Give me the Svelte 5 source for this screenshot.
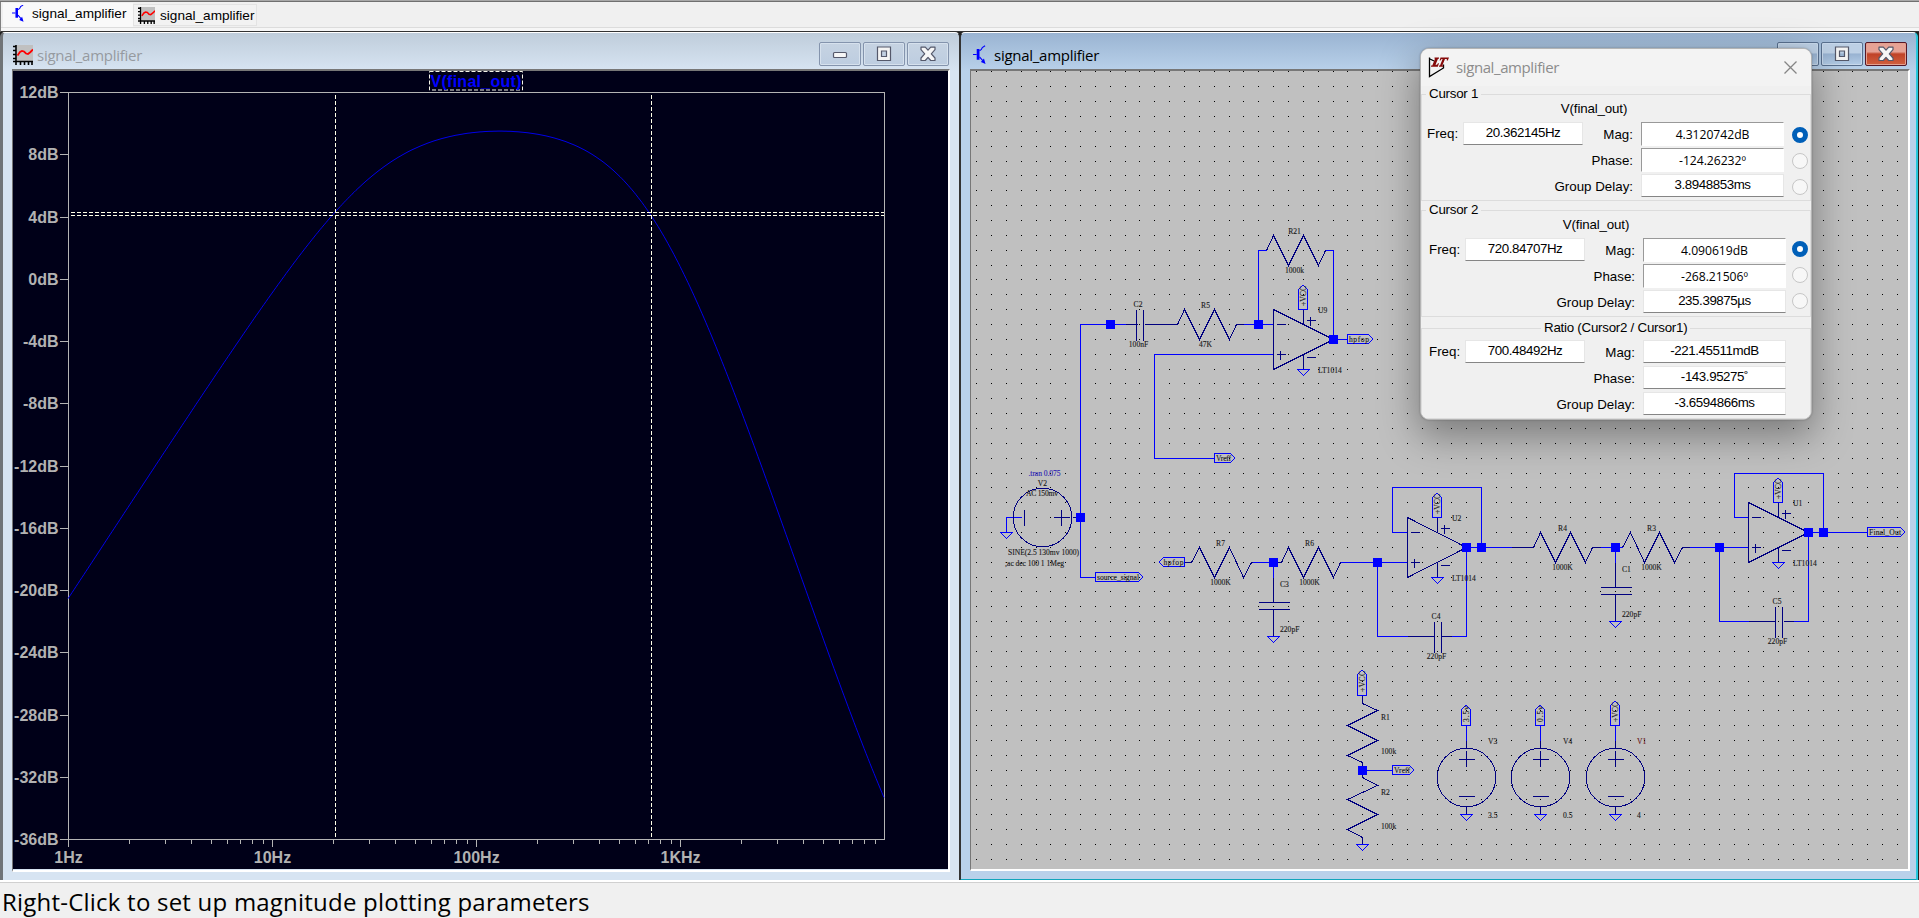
<script>
  // Schematic grid: column k and row n to pixel centres
  const X = (k) => Math.floor(976.6 + 14.852 * k) + 0.5;
  const Y = (n) => Math.floor(71.87 + 14.857 * n) + 0.5;

  let dots = '';
  for (let n = 0; n < 54; n++)
    for (let k = 0; k < 63; k++) dots += `M${X(k) - 0.5} ${Y(n)}h1`;

  const poly = (pts) => 'M' + pts.map(([k, n]) => `${X(k)} ${Y(n)}`).join('L');

  const wires = [
    [[9, 17], [7, 17], [7, 34], [8, 34]],
    [[9, 17], [10, 17]],
    [[18, 17], [20, 17]],
    [[19, 17], [19, 12], [19.5, 12]],
    [[23.5, 12], [24, 12], [24, 18], [25, 18]],
    [[20, 19], [12, 19], [12, 26], [16, 26]],
    [[3, 30], [2, 30], [2, 31]],
    [[18.6, 33], [20, 33]],
    [[20, 33], [20, 34]],
    [[24.5, 33], [29, 33]],
    [[29, 31], [28, 31], [28, 28], [34, 28], [34, 32]],
    [[33, 32], [36, 32]],
    [[27, 33], [27, 38], [29, 38]],
    [[32, 38], [33, 38], [33, 32]],
    [[42, 32], [43.5, 32]],
    [[43, 32], [43, 33]],
    [[48, 32], [52, 32]],
    [[52, 30], [51, 30], [51, 27], [57, 27], [57, 31]],
    [[56, 31], [60, 31]],
    [[50, 32], [50, 37], [52, 37]],
    [[55, 37], [56, 37], [56, 31]],
    [[26, 47], [28, 47]],
    [[33, 44], [33, 45]],
    [[38, 44], [38, 45]],
    [[43, 44], [43, 45]]
  ].map(poly).join('');

  const leads = [
    [[10, 17], [10.8, 17]],
    [[11.3, 17], [13.5, 17]],
    [[17.5, 17], [18, 17]],
    [[2, 30], [2.55, 30]],
    [[6.45, 30], [7, 30]],
    [[14, 33], [14.5, 33]],
    [[18.5, 33], [19, 33]],
    [[20, 33], [20.5, 33]],
    [[24.5, 33], [25, 33]],
    [[36, 32], [37.5, 32]],
    [[41.5, 32], [42, 32]],
    [[47.5, 32], [48, 32]],
    [[29, 38], [30.8, 38]],
    [[31.3, 38], [32.2, 38]],
    [[52, 37], [53.8, 37]],
    [[54.3, 37], [55.2, 37]]
  ].map(poly).join('');

  const squares = [[9, 17], [19, 17], [24, 18], [7, 30], [20, 33], [27, 33], [33, 32], [34, 32], [43, 32], [50, 32], [56, 31], [57, 31], [26, 47]];

  const hres = [
    [13, 17, 'R5', '47K'], [19, 12, 'R21', '1000k'], [14, 33, 'R7', '1000K'],
    [20, 33, 'R6', '1000K'], [37, 32, 'R4', '1000K'], [43, 32, 'R3', '1000K']
  ];
  const zig = (k, n) =>
    poly([[k + 0.5, n], [k + 1, n - 1], [k + 2, n + 1], [k + 3, n - 1], [k + 4, n + 1], [k + 4.5, n]]);
  const vres = [[26, 42, 'R1', '100k'], [26, 47, 'R2', '100k']];
  const vzig = (k, n) =>
    poly([[k, n], [k, n + 0.5], [k + 1, n + 1], [k - 1, n + 2], [k + 1, n + 3], [k - 1, n + 4], [k, n + 4.5], [k, n + 5]]);
  const hcaps = [[11, 17, 'C2', '100nF'], [31, 38, 'C4', '220pF'], [54, 37, 'C5', '220pF']];
  const vcaps = [[20, 36, 'C3', '220pF'], [43, 35, 'C1', '220pF']];
  const amps = [[20, 16, 'U9'], [29, 30, 'U2'], [52, 29, 'U1']];
  const sources = [[33, 'V3', '3.5', 1488], [38, 'V4', '0.5', 1563], [43, 'V1', '4', 1637]];
  const grounds = [[22, 20], [31, 34], [54, 33], [20, 38], [43, 37], [2, 31], [26, 52], [33, 50], [38, 50], [43, 50]];
  const upTags = [[22, 16, '+VCC', 25], [31, 30, '+VCC', 25], [54, 29, '+VCC', 25], [26, 42, '+VCC', 26], [33, 44, '3.5v', 21], [38, 44, '0.5v', 21], [43, 44, '+VCC', 25]];
  const sideTags = [
    [25, 18, 'hpfop', 21, 1], [16, 26, 'Vreff', 16, 1], [8, 34, 'source_signal', 43, 1],
    [14, 33, 'hpfop', 21, -1], [60, 31, 'Final_Out', 33, 1], [28, 47, 'Vreff', 17, 1]
  ];

  // Frequency response of the filter
  const gain = (f) => {
    const hp = f / Math.sqrt(f * f + 33.9 * 33.9);
    const lp = 1 / (1 + (f / 723) ** 2);
    return 20 * Math.log10(3.191 * hp * lp) + 2.3 * (f / 10000) ** 1.7;
  };
  let curve = '';
  for (let x = 68; x <= 884; x += 2) {
    const y = 92.5 + ((12 - gain(10 ** ((x - 68) / 204))) * 62.25) / 4;
    curve += (curve ? 'L' : 'M') + x + ' ' + y.toFixed(1);
  }
  const yTicks = Array.from({ length: 13 }, (_, i) => ({ y: Math.round(92 + i * 62.25) + 0.5, t: 12 - 4 * i + 'dB' }));
  const xTicks = ['1Hz', '10Hz', '100Hz', '1KHz'].map((t, i) => ({ t, x: 68.5 + 204 * i }));
  let minors = '';
  for (let d = 0; d < 4; d++)
    for (let m = 2; m < 10; m++) minors += `M${Math.round(68 + 204 * (d + Math.log10(m))) + 0.5} 840v4`;

  const groups = [
    { cls: 'one', legend: 'Cursor 1', sub: 'V(final_out)', freq: '20.362145Hz', rows: [['Mag:', '4.3120742dB'], ['Phase:', '-124.26232º'], ['Group Delay:', '3.8948853ms']], radios: true },
    { cls: 'two', legend: 'Cursor 2', sub: 'V(final_out)', freq: '720.84707Hz', rows: [['Mag:', '4.090619dB'], ['Phase:', '-268.21506º'], ['Group Delay:', '235.39875µs']], radios: true },
    { cls: 'three', legend: 'Ratio (Cursor2 / Cursor1)', sub: '', freq: '700.48492Hz', rows: [['Mag:', '-221.45511mdB'], ['Phase:', '-143.95275˚'], ['Group Delay:', '-3.6594866ms']], radios: false }
  ];
</script>

{#snippet plotIcon(size)}
  <svg width={size} height={size} viewBox="0 0 20 20">
    <rect x="4" y="0" width="16" height="16" fill="#c0c0c0" />
    <path d="M3 0V20M0 16.5H20M0 1.5H3M0 5.5H3M0 9.5H3M0 13.5H3M7.5 17V20M11.5 17V20M15.5 17V20M19 17V20" stroke="#000" stroke-width="1.6" fill="none" />
    <path d="M4.5 10.5L7 7L9 6L11 6.5L13 8.5L15 9L17.5 7L20 4.5" stroke="#f00" stroke-width="1.8" fill="none" />
  </svg>
{/snippet}

{#snippet transistor(w, h)}
  <svg width={w} height={h} viewBox="0 0 14 20">
    <path d="M0 9.500H4M7 5.500L9 4L10 2L13 0M7 12L10.500 16" stroke="#00f" stroke-width="1.2" fill="none" />
    <path d="M4 3.500h3v11.500H4zM13.500 19.700L8.500 17.500L11.800 13.800Z" fill="#00f" />
  </svg>
{/snippet}

{#snippet controls(active)}
  <div class="controls" class:active>
    <span class="btn"><svg width="16" height="12" viewBox="0 0 16 12"><rect x="1.500" y="4.500" width="13" height="5" rx="1" fill="#f6f6f6" stroke="#55596b" stroke-width="1.2" /></svg></span>
    <span class="btn"><svg width="18" height="16" viewBox="0 0 18 16"><path fill-rule="evenodd" d="M2.500 1h13v13.500h-13zM6.500 5v5.500h5V5z" fill="#f4f4f4" stroke="#55596b" stroke-width="1.2" /></svg></span>
    <span class="btn close"><svg width="18" height="16" viewBox="0 0 18 16"><path d="M2 1.200h4.300L9 4.200L11.700 1.200H16V3.700L12.300 7.800L16 12V14.500H11.700L9 11.400L6.300 14.500H2V12L5.700 7.800L2 3.700Z" fill="#f6f6f6" stroke="#55596b" stroke-width="1.2" stroke-linejoin="round" /></svg></span>
  </div>
{/snippet}

<div class="app">
  <nav class="tabs">
    <div class="tab on"><span class="ti">{@render transistor(12, 17)}</span>signal_amplifier</div>
    <div class="tab off"><span class="ti">{@render plotIcon(17)}</span>signal_amplifier</div>
  </nav>

  <main class="mdi">
    <section class="win idle">
      <header class="bar">
        {@render plotIcon(20)}
        <span class="title">signal_amplifier</span>
        {@render controls(false)}
      </header>
      <div class="pane">
        <svg class="plot" viewBox="13 71 936 798" width="936" height="798">
          <rect x="13" y="71" width="936" height="798" fill="#000018" />
          <path d="M68.500 92.500H884.500V839.500H68.500ZM{yTicks.map((t) => `60 ${t.y}H68`).join('M')}M{xTicks.map((t) => `${t.x} 840v7`).join('M')}{minors}" class="axis" />
          {#each yTicks as t}
            <text x="58.500" y={t.y + 5.3} class="lbl" text-anchor="end">{t.t}</text>
          {/each}
          {#each xTicks as t}
            <text x={t.x} y="863" class="lbl" text-anchor="middle">{t.t}</text>
          {/each}
          <path d={curve} class="curve" />
          <path d="M335.500 95V838M651.500 95V838" class="cursor v" />
          <path d="M71 212.500H884M71 215.500H884" class="cursor h" />
          <rect x="429.500" y="71.500" width="93" height="18.500" class="sel" />
          <text x="430.500" y="86.500" class="name" textLength="91">V(final_out)</text>
        </svg>
      </div>
    </section>

    <section class="win live">
      <header class="bar">
        {@render transistor(13, 20)}
        <span class="title">signal_amplifier</span>
        {@render controls(true)}
      </header>
      <div class="pane">
        <svg class="sch" viewBox="971 71 937 798" width="937" height="798">
          <rect x="971" y="71" width="937" height="798" fill="#c0c0c0" />
          <path d={dots} stroke="#000" shape-rendering="crispEdges" />
          <path d={leads} class="sym" />
          <path d={wires} class="wire" />

          {#each hres as [k, n, name, val]}
            <path d={zig(k, n)} class="sym" />
            <text x={X(k) + 36} y={Y(n) - 17} class="m">{name}</text>
            <text x={X(k) + 36} y={Y(n) + 22} class="m">{val}</text>
          {/each}
          {#each vres as [k, n, name, val]}
            <path d={vzig(k, n)} class="sym" />
            <text x={X(k) + 18.5} y={Y(n) + 24.500}>{name}</text>
            <text x={X(k) + 18.5} y={Y(n) + 58}>{val}</text>
          {/each}
          {#each hcaps as [k, n, name, val]}
            <path d="M{X(k) - 3} {Y(n) - 15}v31m7 0v-31" class="sym" />
            <text x={X(k) - 1.5} y={Y(n) - 17.500} class="m">{name}</text>
            <text x={X(k) - 1} y={Y(n) + 22} class="m">{val}</text>
          {/each}
          {#each vcaps as [k, n, name, val]}
            <path d="M{X(k) - 15} {Y(n) - 4}h31M{X(k) - 15} {Y(n) + 3}h31M{X(k)} {Y(n - 2)}V{Y(n) - 4}M{X(k)} {Y(n) + 3}V{Y(n + 2)}" class="sym" />
            <text x={X(k) + 6.5} y={Y(n) - 20}>{name}</text>
            <text x={X(k) + 6.5} y={Y(n) + 25.500}>{val}</text>
          {/each}
          {#each amps as [k, n, name]}
            <path d="{poly([[k, n], [k + 4, n + 2], [k, n + 4], [k, n]])}M{X(k + 2)} {Y(n)}V{Y(n + 1)}M{X(k + 2)} {Y(n + 3)}V{Y(n + 4)}M{X(k) + 3} {Y(n + 1)}h9M{X(k) + 3} {Y(n + 3)}h9m-5 -4v9M{X(k + 2) + 3} {Y(n + 1) - 4}h9m-5 -4v9M{X(k + 2) + 3} {Y(n + 3) + 3}h9" class="sym" />
            <text x={X(k) + 44.500} y={Y(n) + 3}>{name}</text>
            <text x={X(k) + 44.500} y={Y(n + 4) + 3}>LT1014</text>
          {/each}

          <circle cx="1042.500" cy="517.500" r="29.300" class="sym" />
          <path d="M1024.500 510v16M1061.500 510v16M1054 517.500h16" class="sym" />
          <text x="1028.500" y="476" class="dir" textLength="32">.tran 0.075</text>
          <text x="1042.500" y="485.500" class="m">V2</text>
          <text x="1042" y="495.500" class="m" textLength="32">AC 150mv</text>
          <text x="1008" y="554.500" textLength="71">SINE(2.5 130mv 1000)</text>
          <text x="1005" y="565.500" textLength="59">;ac dec 100 1 1Meg</text>

          {#each sources as [k, name, val, lx]}
            <circle cx={X(k)} cy="777.500" r="29.300" class="sym" />
            <path d="M{X(k)} {Y(45)}v7M{X(k)} 807V{Y(50)}M{X(k) - 8} 759.500h16M{X(k)} 751v16M{X(k) - 8} 796.500h16" class="sym" />
            <text x={lx} y="743.500" class:hot={name === 'V1'}>{name}</text>
            <text x={lx} y="817.500">{val}</text>
          {/each}
          {#each grounds as [k, n]}
            <path d="M{X(k) - 6} {Y(n)}h12l-6 6Z" class="wire" />
          {/each}
          {#each upTags as [k, n, t, h]}
            <path d="M{X(k) - 5} {Y(n)}h9v-{h - 5}l-4 -4h-1l-4 4Z" class="wire" />
            <text transform="translate({X(k) + 2} {Y(n) - 3.5}) rotate(-90)" textLength={h - 5}>{t}</text>
          {/each}
          {#each sideTags as [k, n, t, w, d]}
            <path d="M{X(k)} {Y(n) - 5}v9h{d * w}l{d * 4} -4v-1l{d * -4} -4Z" class="wire" />
            <text x={d > 0 ? X(k) + 1.500 : X(k) - w} y={Y(n) + 2.500} textLength={w - 1}>{t}</text>
          {/each}
          {#each squares as [k, n]}
            <rect x={X(k) - 4.500} y={Y(n) - 4.500} width="9" height="9" fill="#00f" />
          {/each}
        </svg>
      </div>
    </section>
  </main>

  <footer class="status"><span>Right-Click to set up magnitude plotting parameters</span></footer>

  <aside class="dialog">
    <header>
      <svg width="21" height="21" viewBox="0 0 21 21">
        <path d="M1.500 0.500V19.500L15.500 11V7.500M1 1.500L6 4" fill="none" stroke="#000" stroke-width="1.300" />
        <path d="M6.500 0.500H11V1.800H10L7.500 7.800H9L10 6.300H11L9.800 9.800H3V8.500H4.300L7 1.800H6.500ZM12.500 0.500H21L19.800 3.500H18.800V2H17L14.300 8.500H15.300V9.800H11V8.500H12L14.600 2H13.500L12.500 3.500H11.600Z" fill="#850909" />
      </svg>
      <span>signal_amplifier</span>
      <svg class="x" width="13" height="13" viewBox="0 0 13 13"><path d="M0.500 0.500L12.500 12.500M12.500 0.500L0.500 12.500" stroke="#858585" stroke-width="1.300" /></svg>
    </header>
    {#each groups as g}
      <fieldset class="grp {g.cls}">
        <legend>{g.legend}</legend>
        {#if g.sub}<p>{g.sub}</p>{/if}
        <div class="fields">
          {#each g.rows as [label, value], i}
            {#if i === 0}
              <span class="fl">Freq:</span><span class="box flat">{g.freq}</span>
            {:else}<i></i><i></i>{/if}
            <span class="rl">{label}</span>
            <span class="box" class:flat={i === 2 || !g.radios} class:sunk={i < 2 && g.radios}>{value}</span>
            {#if g.radios}<b class="radio" class:checked={i === 0}></b>{:else}<i></i>{/if}
          {/each}
        </div>
      </fieldset>
    {/each}
  </aside>
</div>

<style>
  :global(body) { overflow: hidden; }
  .app { position: relative; width: 1919px; height: 918px; box-sizing: border-box; display: flex; flex-direction: column; background: #f0f0f0; border-top: 1px solid #a8a8a8; color: #000; font-family: 'Liberation Sans', Arial, sans-serif; }
  .app::before { content: ''; height: 1px; flex: none; background: #707070; }
  .tabs { height: 30px; flex: none; box-sizing: border-box; display: flex; align-items: flex-start; padding: 1px 0 0 2px; font-size: 13.600px; border-left: 1px solid #808080; border-bottom: 1px solid #333; box-shadow: inset 0 -3px #f6f6f6, inset 0 -4px #dcdcdc; }
  .tab { display: flex; align-items: center; box-sizing: border-box; }
  .tab.on { width: 130px; height: 24px; background: #f9f9f9; padding: 0 0 3px 9px; }
  .tab.off { width: 124px; height: 22px; margin-top: 1px; padding-left: 4px; background: #f2f2f2; border: 1px solid #e3e3e3; }
  .ti { display: flex; width: 20px; }
  .tab.off .ti { width: 22px; }
  .mdi { height: 848px; flex: none; display: grid; grid-template-columns: 960px 959px; background: #222; }
  .win { box-sizing: border-box; display: flex; flex-direction: column; border-radius: 5px 5px 0 0; border-top: 1px solid #fff; }
  .idle { border-left: 3px solid #707478; border-right: 1px solid #333; border-bottom: 1px solid #555; background: linear-gradient(#bfcddb, #d7e4f2 38px); padding: 0 9px 8px 9px; }
  .live { border-left: 1px solid #333; border-right: 2px solid #26c8dc; border-bottom: 2px solid #11a5bb; background: linear-gradient(#9ab4d2, #b9d1ea 38px); padding: 0 6px 8px 9px; margin-right: 1px; }
  .bar { height: 36px; flex: none; display: flex; align-items: center; padding: 7px 0 0 1px; font: 15px 'Open Sans', sans-serif; box-sizing: border-box; }
  .title { margin-left: 4px; letter-spacing: -0.270px; flex: 1; }
  .idle .title { color: #969aa0; }
  .live .bar { padding-left: 3px; }
  .live .title { margin-left: 8px; }
  .controls { display: flex; gap: 2px; align-self: flex-start; margin: 2px 3px 0 0; }
  .idle .controls { margin-right: 1px; }
  .btn { width: 42px; height: 24px; box-sizing: border-box; display: flex; align-items: center; justify-content: center; border: 1px solid #8494ad; border-radius: 2px; background: linear-gradient(#c6d3e2, #bdcde0); box-shadow: inset 0 0 0 1px #d6e1ed; }
  .active .btn { border-color: #59708f; background: linear-gradient(#bdd0e5 45%, #98b2d1 50%, #b4cde7); box-shadow: inset 0 0 0 1px #c8d9ec; }
  .active .close { border-color: #571726; background: linear-gradient(#e6a295 40%, #c04227 50%, #d0603f); box-shadow: inset 0 0 0 1px #e3a08f; }
  .pane { flex: 1; box-sizing: border-box; border: 2px solid #fff; border-top-color: #777; border-left: 1px solid #777; display: flex; overflow: hidden; }
  .pane svg { display: block; flex: none; }
  .axis { fill: none; stroke: #b4b4b4; shape-rendering: crispEdges; }
  .lbl { font: bold 16px 'Liberation Sans', sans-serif; fill: #b2b2b2; }
  .curve { fill: none; stroke: #0000e8; stroke-width: 1; }
  .cursor { fill: none; stroke: #ffffe8; shape-rendering: crispEdges; }
  .v { stroke-dasharray: 4 2; }
  .h { stroke-dasharray: 4 2; }
  .sel { fill: none; stroke: #f4f4e8; stroke-dasharray: 4 2; }
  .name { font: bold 16px 'Liberation Sans', sans-serif; fill: #00f; }
  .sch text { font: 7.600px 'Liberation Serif', serif; fill: #161616; stroke: #222; stroke-width: 0.120; }
  .sch text.m { text-anchor: middle; }
  .sch text.dir { fill: #2a1cb4; stroke: #2a1cb4; }
  .sch text.hot { fill: #7a1010; }
  .sym { fill: none; stroke: #000080; shape-rendering: crispEdges; }
  .wire { fill: none; stroke: #00f; shape-rendering: crispEdges; }
  .status { flex: 1; display: flex; align-items: center; padding: 3px 0 0 2px; border-top: 2px solid #fff; box-shadow: inset 0 1px #d0d0d0; font: 24px 'Open Sans', sans-serif; letter-spacing: 0.220px; }
  .status span { white-space: nowrap; line-height: 28px; }
  .dialog { position: absolute; left: 1420px; top: 47px; width: 392px; height: 372px; box-sizing: border-box; display: flex; flex-direction: column; border: 1px solid #b4b4b4; border-radius: 9px; overflow: hidden; background: #f0f0f0; box-shadow: 0 14px 38px 2px rgba(0, 0, 0, 0.36), 0 0 2px rgba(0, 0, 0, 0.300); font-size: 13.330px; }
  .dialog header { height: 37px; flex: none; display: flex; align-items: center; background: #f3f3f3; padding: 0 14px 0 7px; font: 15px 'Open Sans', sans-serif; color: #8c8c8c; box-sizing: border-box; padding-bottom: 1px; }
  .dialog header span { margin-left: 7px; flex: 1; letter-spacing: -0.400px; }
  .grp { margin: 0; padding: 0; border: 1px solid #dcdcdc; min-width: 0; box-sizing: border-box; flex: none; }
  .one { height: 115px; }
  .two { height: 115px; margin-top: 1px; }
  .three { height: 99px; margin-top: 3px; }
  legend { padding: 0 3px; margin-left: 4px; line-height: 16px; height: 16px; letter-spacing: -0.250px; }
  .three legend { margin-left: 119px; }
  p { margin: 0; text-align: center; line-height: 14px; padding-right: 44px; height: 14px; letter-spacing: -0.150px; }
  .two p { padding-right: 40px; }
  .fields { display: grid; grid-template-columns: 36px 120px 50px 151px 1fr; grid-template-rows: repeat(3, 24px); row-gap: 2px; padding: 6px 0 0 5px; }
  .two .fields, .three .fields { padding-left: 7px; }
  .three .fields { padding-top: 4px; }
  .fl { line-height: 24px; }
  .rl { line-height: 26px; text-align: right; justify-self: end; white-space: nowrap; }
  .box { box-sizing: border-box; height: 23px; background: #fff; text-align: center; line-height: 20px; border: 1px solid #e6e6e6; border-bottom-color: #858585; letter-spacing: -0.420px; }
  .fields .rl + .box { margin-left: 8px; }
  .box.sunk { height: 24px; border: 1px solid #fff; border-top-color: #999; border-left-color: #999; font: 12.200px/24px 'Open Sans', sans-serif; letter-spacing: -0.050px; }
  .radio { width: 16px; height: 16px; box-sizing: border-box; border: 1px solid #c6c6c6; border-radius: 50%; background: #f7f7f7; margin: 5px 0 0 8px; }
  .two .radio { margin: 3px 0 0 6px; }
  .radio.checked { border: 5px solid #005fb8; background: #fff; }
</style>
